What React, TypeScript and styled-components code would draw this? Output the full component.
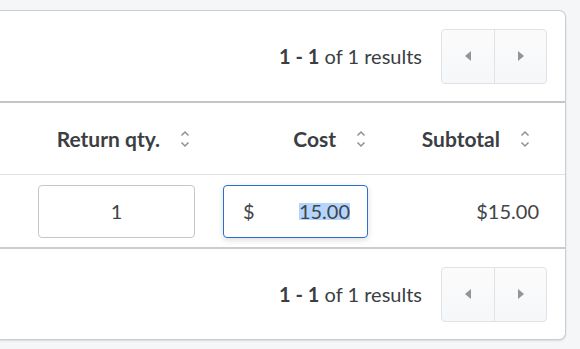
import React from 'react';
import styled, { createGlobalStyle } from 'styled-components';

const Global = createGlobalStyle`
  body {
    margin: 0;
    background: #f4f6f8;
    font-family: Lato, "Noto Sans", sans-serif;
    color: #3b3e42;
  }
`

const Page = styled.div`
  padding: 10px 14px 10px 0;
`

const Card = styled.div`
  background: #fff;
  border: 1px solid #c9ccd0;
  border-left: none;
  border-radius: 0 7px 7px 0;
  box-shadow: 0 1px 2px rgba(0, 0, 0, 0.12);
`

const Toolbar = styled.div<{ $top?: boolean }>`
  display: flex;
  justify-content: flex-end;
  align-items: center;
  gap: 19px;
  height: 90px;
  padding-right: 18px;
  border-bottom: ${props => props.$top ? '2px solid #c2c6ca' : 'none'};
`

const Results = styled.div`
  font-size: 20px;
  color: #3b3e42;
  b {
    font-weight: 700;
  }
`

const Pager = styled.div`
  display: flex;
  height: 53px;
  border: 1px solid #dfe3e8;
  border-radius: 4px;
  background: linear-gradient(#fbfbfc, #f6f7f8);
  overflow: hidden;
`

const PagerButton = styled.button`
  width: 52px;
  height: 100%;
  border: none;
  background: transparent;
  display: flex;
  align-items: center;
  justify-content: center;
  padding: 0;
  & + & {
    border-left: 1px solid #dfe3e8;
  }
`

const Row = styled.div<{ $head?: boolean }>`
  display: grid;
  grid-template-columns: 206px 178px 1fr;
  height: ${props => props.$head ? '71px' : '72px'};
  align-items: center;
  border-bottom: ${props => props.$head ? '1px solid #dfe3e8' : '2px solid #c9ccd0'};
`

const HeadCell = styled.div<{ $inset: number }>`
  display: flex;
  justify-content: flex-end;
  align-items: center;
  gap: 20px;
  padding-right: ${props => props.$inset}px;
  font-size: 21px;
  font-weight: 700;
  color: #3b3e42;
`

const Cell = styled.div<{ $inset: number }>`
  display: flex;
  justify-content: flex-end;
  align-items: center;
  padding-right: ${props => props.$inset}px;
  font-size: 20px;
  color: #424548;
`

const QtyBox = styled.div`
  width: 155px;
  height: 51px;
  border: 1px solid #c4c8cc;
  border-radius: 4px;
  display: flex;
  align-items: center;
  justify-content: center;
  font-size: 20px;
  color: #424548;
`

const CostBox = styled.div`
  width: 107px;
  height: 51px;
  border: 1px solid #2c6ecb;
  border-radius: 4px;
  box-shadow: 0 2px 6px rgba(0, 0, 0, 0.14);
  display: flex;
  align-items: center;
  justify-content: space-between;
  padding: 0 17px 0 19px;
  font-size: 20px;
  color: #424548;
`

const Selected = styled.span`
  display: inline-block;
  height: 17px;
  line-height: 17px;
  background: #b4d5fe;
`

const SortIcon = () => (
  <svg width="10" height="18" viewBox="0 0 10 18">
    <path d="M1.5 5.5 L5 2 L8.5 5.5" fill="none" stroke="#8c9196" strokeWidth="1.5" />
    <path d="M1.5 12.5 L5 16 L8.5 12.5" fill="none" stroke="#8c9196" strokeWidth="1.5" />
  </svg>
)

const Arrow = ({ dir }: { dir: 'left' | 'right' }) => (
  <svg width="8" height="12" viewBox="0 0 8 12">
    {dir === 'left'
      ? <path d="M7 1 L1 6 L7 11 Z" fill="#919599" />
      : <path d="M1 1 L7 6 L1 11 Z" fill="#919599" />}
  </svg>
)

const Pagination = ({ top }: { top?: boolean }) => (
  <Toolbar $top={top}>
    <Results><b>1 - 1</b> of 1 results</Results>
    <Pager>
      <PagerButton><Arrow dir="left" /></PagerButton>
      <PagerButton><Arrow dir="right" /></PagerButton>
    </Pager>
  </Toolbar>
)

export default function App() {
  return (
    <Page>
      <Global />
      <Card>
        <Pagination top />
        <Row $head>
          <HeadCell $inset={16}>Return qty. <SortIcon /></HeadCell>
          <HeadCell $inset={18}>Cost <SortIcon /></HeadCell>
          <HeadCell $inset={35}>Subtotal <SortIcon /></HeadCell>
        </Row>
        <Row>
          <Cell $inset={11}><QtyBox>1</QtyBox></Cell>
          <Cell $inset={16}>
            <CostBox><span>$</span><Selected>15.00</Selected></CostBox>
          </Cell>
          <Cell $inset={26}>$15.00</Cell>
        </Row>
        <Pagination />
      </Card>
    </Page>
  );
}
